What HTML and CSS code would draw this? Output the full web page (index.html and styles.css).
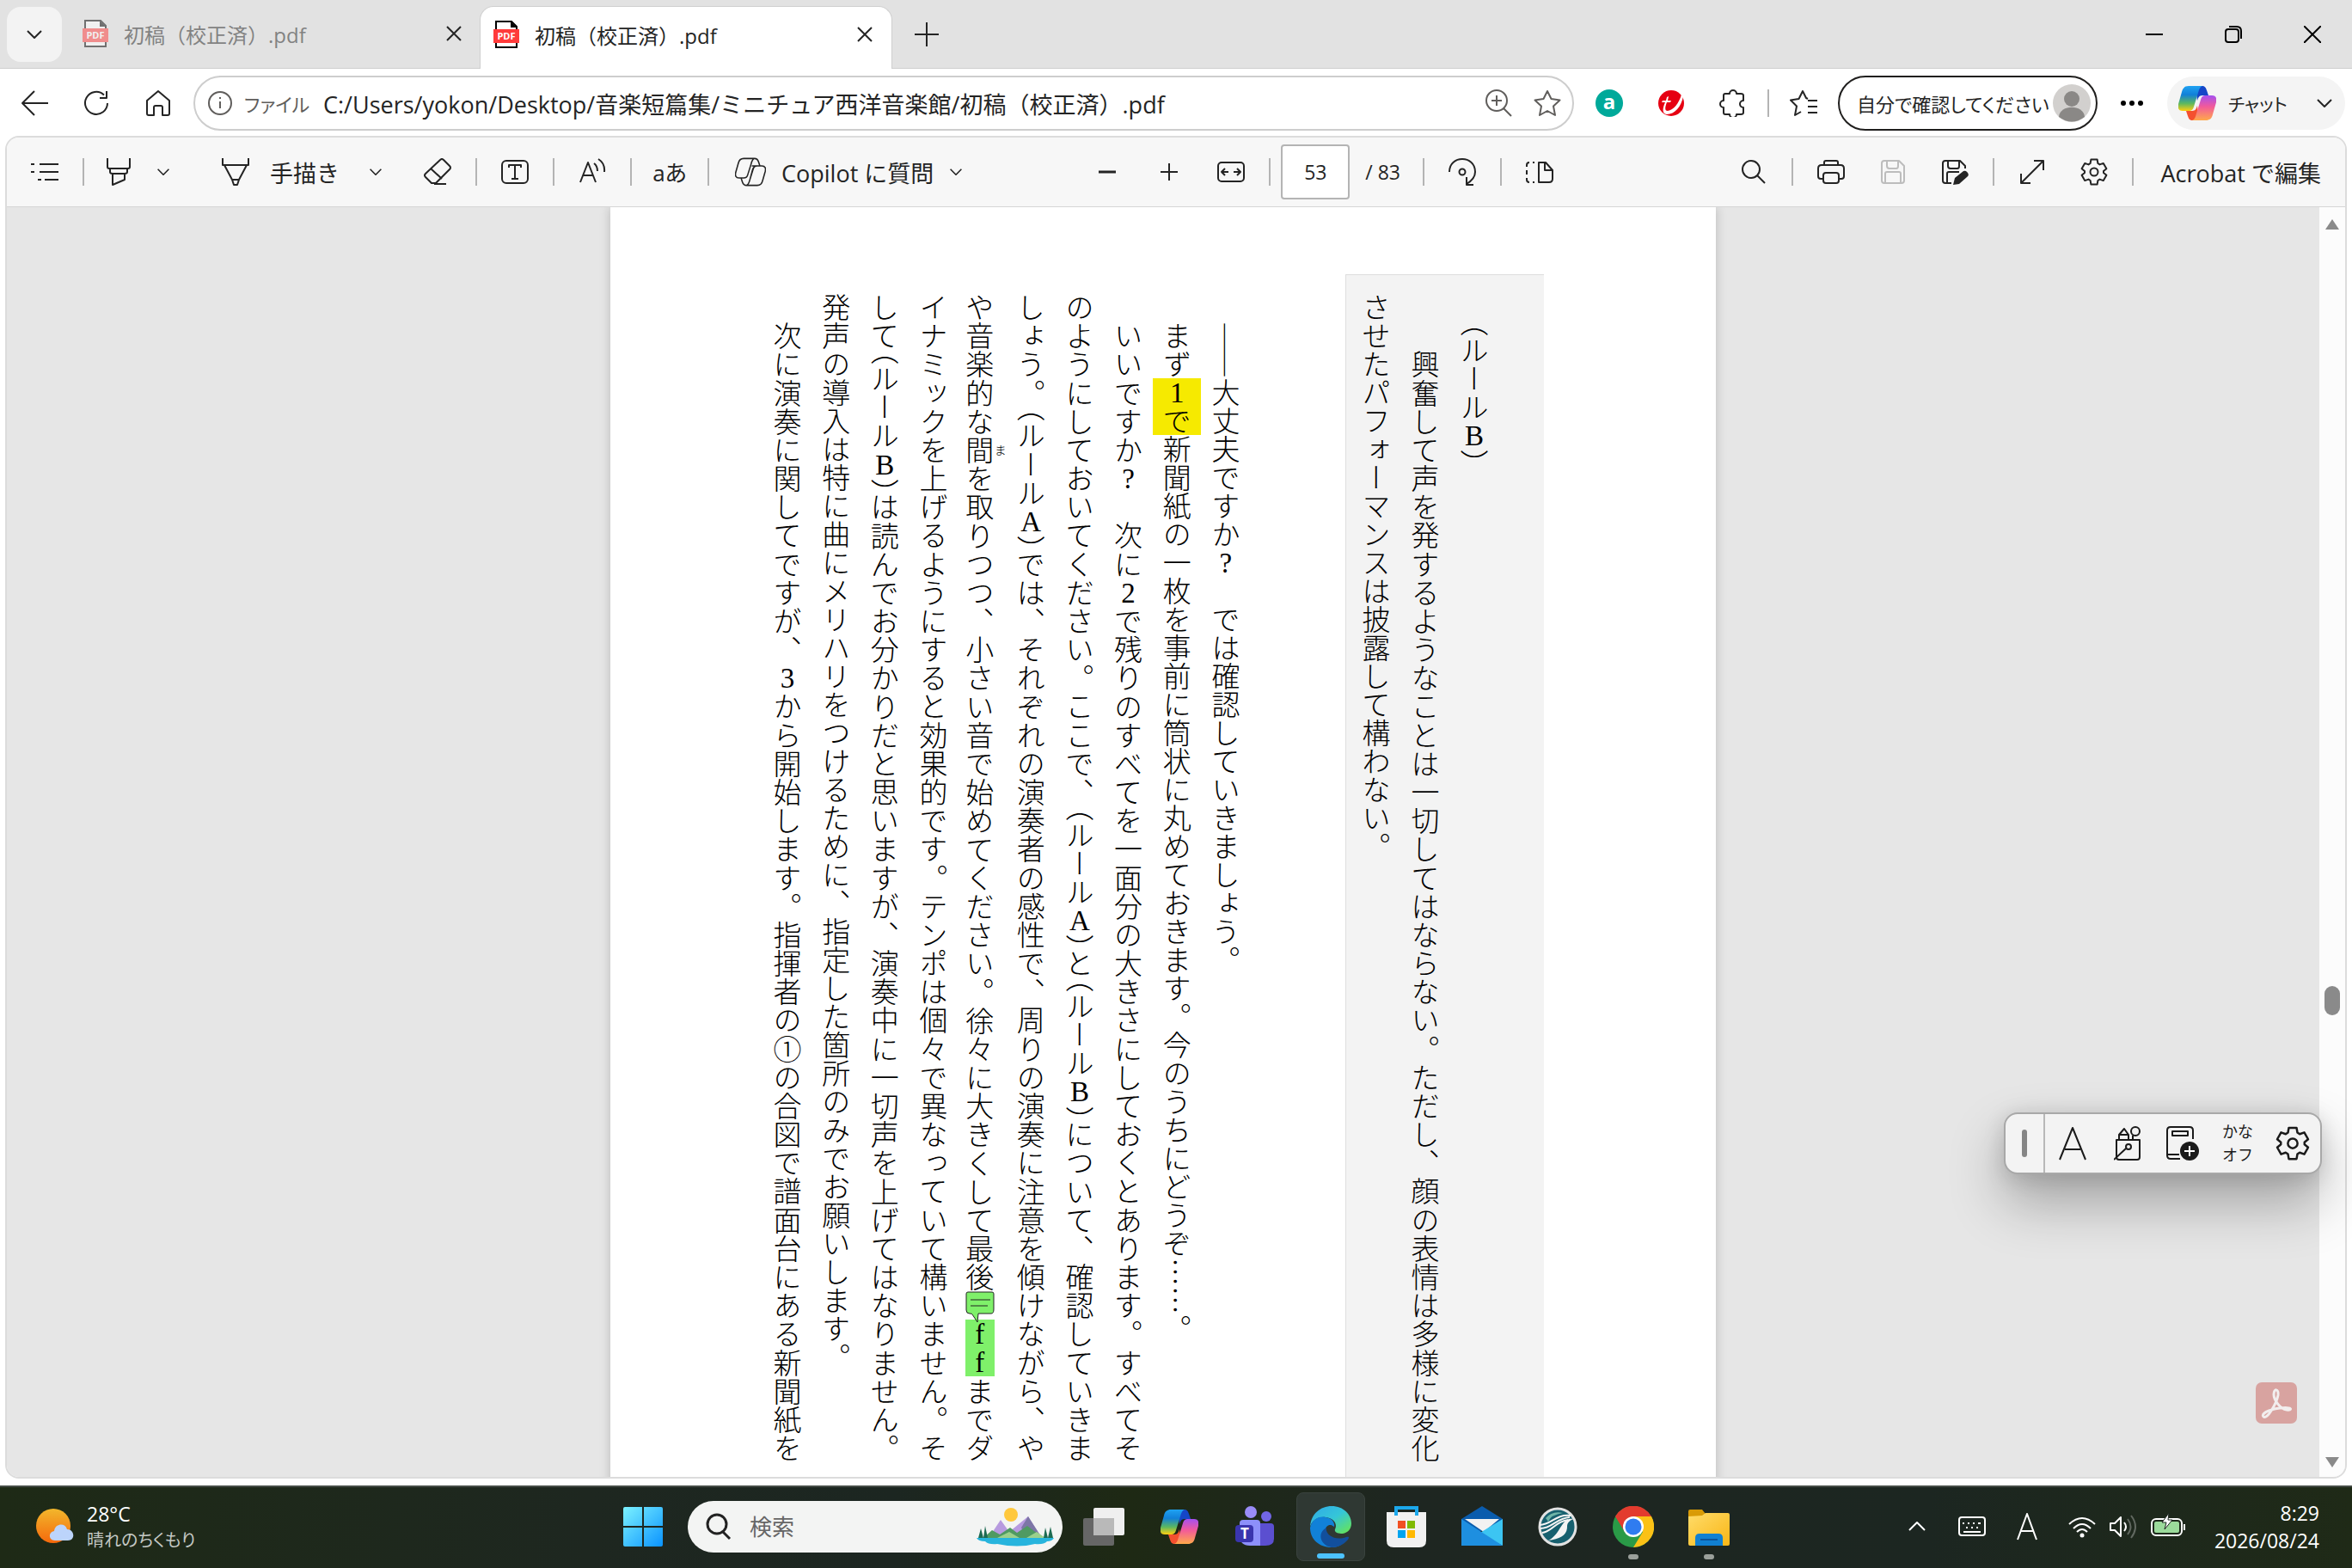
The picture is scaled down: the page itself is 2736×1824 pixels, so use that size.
FILE: index.html
```
<!DOCTYPE html>
<html lang="ja">
<head>
  <meta charset="UTF-8">
  <meta name="viewport" content="width=device-width, initial-scale=1.0">
  <title>初稿（校正済）.pdf</title>
  <link rel="stylesheet" href="styles.css">
</head>
<body>
  <!-- 共通アイコン -->
  <svg class="defs" aria-hidden="true">
    <defs>
      <linearGradient id="cpA" x1="0" y1="0" x2="0" y2="1">
        <stop offset="0" stop-color="#1fa2f2"/><stop offset=".35" stop-color="#1180d8"/>
        <stop offset=".7" stop-color="#5cb860"/><stop offset="1" stop-color="#ffcf10"/>
      </linearGradient>
      <linearGradient id="cpB" x1="0" y1="1" x2="0" y2="0">
        <stop offset="0" stop-color="#a550f0"/><stop offset=".45" stop-color="#f25a9a"/>
        <stop offset="1" stop-color="#ffa94a"/>
      </linearGradient>
      <linearGradient id="edA" x1="0" y1="0" x2="1" y2="1">
        <stop offset="0" stop-color="#2fa8e8"/><stop offset=".5" stop-color="#35c6d8"/><stop offset="1" stop-color="#6be84a"/>
      </linearGradient>
      <linearGradient id="win" x1="0" y1="0" x2="1" y2="1">
        <stop offset="0" stop-color="#7cf2ff"/><stop offset="1" stop-color="#0a93ff"/>
      </linearGradient>
      <linearGradient id="sun" x1="0" y1="0" x2="0" y2="1">
        <stop offset="0" stop-color="#f2b72c"/><stop offset="1" stop-color="#f5690c"/>
      </linearGradient>
      <linearGradient id="fold" x1="0" y1="0" x2="1" y2="1">
        <stop offset="0" stop-color="#ffdc6a"/><stop offset="1" stop-color="#f9b616"/>
      </linearGradient>
    </defs>
    <symbol id="i-x" viewBox="0 0 20 20"><path d="M2 2l16 16M18 2L2 18"/></symbol>
    <symbol id="i-down" viewBox="0 0 20 20"><path d="M2 6l8 8 8-8"/></symbol>
    <symbol id="i-plus" viewBox="0 0 32 32"><path d="M16 2v28M2 16h28"/></symbol>
    <symbol id="i-gear" viewBox="0 0 32 32">
      <path d="M12.4 1.5H19.6L20.4 6L22.5 7.4L26.8 5.9L30.4 12.2L27 15V17L30.4 19.8L26.8 26.1L22.5 24.6L20.4 26L19.6 30.5H12.4L11.6 26L9.5 24.6L5.2 26.1L1.6 19.8L5 17V15L1.6 12.2L5.2 5.9L9.5 7.4L11.6 6Z"/>
      <circle cx="16" cy="16" r="4.5"/>
    </symbol>
    <symbol id="i-copilot" viewBox="0 0 44 40">
      <path d="M20 0h7c4 0 5 2 6 5l2 6h-7c-4 0-5 3-6 6z" fill="#1546c8"/>
      <path d="M20 0h7c4 0 5 2 6 5l2 6h-7c-4 0-5 3-6 6z" transform="rotate(180 22 20)" fill="#f4502f"/>
      <path d="M12 0h16c-3 1-4 4-5 8l-5 16c-1 4-3 5-6 5H5c-5 0-6-4-5-8L4 7c1-5 4-7 8-7z" fill="url(#cpA)"/>
      <path d="M12 0h16c-3 1-4 4-5 8l-5 16c-1 4-3 5-6 5H5c-5 0-6-4-5-8L4 7c1-5 4-7 8-7z" transform="rotate(180 22 20)" fill="url(#cpB)"/>
    </symbol>
  </svg>

  <header class="tabbar">
    <button class="tab-menu" aria-label="タブ操作"><svg class="ico s20"><use href="#i-down"/></svg></button>
    <div class="tab">
      <svg class="pdf-ico" viewBox="0 0 30 32"><path d="M3 1h18l6 6v24H3z" fill="#fff" stroke="#000" stroke-width="2"/><path d="M20 1v7h7z"/><rect y="10" width="30" height="16" fill="#ff3b3b"/><text x="15" y="22" text-anchor="middle" class="pdf-label">PDF</text></svg>
      <span class="tab-title">初稿（校正済）.pdf</span>
      <button class="tab-close" aria-label="閉じる"><svg class="ico s20"><use href="#i-x"/></svg></button>
    </div>
    <div class="tab active">
      <svg class="pdf-ico" viewBox="0 0 30 32"><path d="M3 1h18l6 6v24H3z" fill="#fff" stroke="#000" stroke-width="2"/><path d="M20 1v7h7z"/><rect y="10" width="30" height="16" fill="#ff3b3b"/><text x="15" y="22" text-anchor="middle" class="pdf-label">PDF</text></svg>
      <span class="tab-title">初稿（校正済）.pdf</span>
      <button class="tab-close" aria-label="閉じる"><svg class="ico s20"><use href="#i-x"/></svg></button>
    </div>
    <button class="btn newtab" aria-label="新しいタブ"><svg class="ico s32"><use href="#i-plus"/></svg></button>
    <div class="win-controls">
      <button aria-label="最小化"><svg class="ico s20" viewBox="0 0 20 20"><path d="M0 10h20"/></svg></button>
      <button aria-label="元に戻す"><svg class="ico s20" viewBox="0 0 20 20"><rect x="1" y="4" width="15" height="15" rx="3"/><path d="M5 1h9q5 0 5 5v9"/></svg></button>
      <button aria-label="閉じる"><svg class="ico s20" viewBox="0 0 20 20"><path d="M0 0l20 20M20 0L0 20"/></svg></button>
    </div>
  </header>

  <nav class="navbar">
    <button class="btn" aria-label="戻る"><svg class="ico s32" viewBox="0 0 32 32"><path d="M32 16H2M16 2L2 16l14 14"/></svg></button>
    <button class="btn" aria-label="更新"><svg class="ico s32" viewBox="0 0 32 32"><path d="M29 16a13 13 0 1 1-4-9.500M28 2v8h-8"/></svg></button>
    <button class="btn" aria-label="ホーム"><svg class="ico s32" viewBox="0 0 32 32"><path d="M3 13L16 2l13 11v15q0 2-2 2h-6v-9q0-2-2-2h-6q-2 0-2 2v9H5q-2 0-2-2z"/></svg></button>
    <div class="address">
      <svg class="ico s28 brown" viewBox="0 0 28 28"><circle cx="14" cy="14" r="13"/><path d="M14 12v8M14 7v2"/></svg>
      <label class="scheme kana" for="url">ファイル</label>
      <input id="url" type="text" value="C:/Users/yokon/Desktop/音楽短篇集/ミニチュア西洋音楽館/初稿（校正済）.pdf">
      <button class="btn small" aria-label="ズーム"><svg class="ico s32 brown" viewBox="0 0 32 32"><circle cx="14" cy="13" r="12"/><path d="M22 22l9 9M14 7v12M8 13h12"/></svg></button>
      <button class="btn small" aria-label="お気に入り"><svg class="ico s32 brown" viewBox="0 0 32 32"><path d="M16 2l4.500 9 10 1.500-7.500 7 2 10.500-9-5-9 5 2-10.500-7.500-7 10-1.500z"/></svg></button>
    </div>
    <button class="btn ext" aria-label="拡張機能 a"><span class="ext-a">a</span></button>
    <button class="btn" aria-label="Trend Micro"><svg class="s32" viewBox="0 0 32 32"><circle cx="16" cy="16" r="15" fill="#e60012"/><path d="M13 8l-1 5h4l-1 2h-4c-2 5-3 10 1 10 7-1 13-9 16-19l2 2C28 20 20 29 11 29c-6-1-5-7-2-14H5l1-2h4l1-4z" fill="#fff"/></svg></button>
    <button class="btn" aria-label="拡張機能"><svg class="ico s32" viewBox="0 0 32 32"><path d="M5 7q0-2 2-2h5a4 4 0 0 1 8 0h5q3 0 3 2v6a4 4 0 0 0 0 8v6q0 2-3 2h-5a4 4 0 0 1-8 0H7q-2 0-2-2v-6a4 4 0 0 1 0-8z"/></svg></button>
    <span class="sep nav-sep"></span>
    <button class="btn" aria-label="コレクション"><svg class="ico s32" viewBox="0 0 32 32"><path d="M21 11l-2-1-4-8-4.500 9-9.500 1.500 7 7-2 10.500 7-4M21 13h11M21 20h11M21 27h11"/></svg></button>
    <button class="profile"><span class="kana">自分で確認してください</span>
      <svg class="avatar" viewBox="0 0 44 44"><circle cx="22" cy="22" r="22" fill="#d2d0ce"/><circle cx="22" cy="17" r="9" fill="#8a8886"/><path d="M7 38c1-15 29-15 30 0q-15 11-30 0z" fill="#8a8886"/></svg>
    </button>
    <button class="btn more" aria-label="設定など"><svg class="s32" viewBox="0 0 32 32"><circle cx="6" cy="16" r="3"/><circle cx="16" cy="16" r="3"/><circle cx="26" cy="16" r="3"/></svg></button>
    <button class="chat"><svg class="s44"><use href="#i-copilot"/></svg><span class="kana">チャット</span><svg class="ico s20"><use href="#i-down"/></svg></button>
  </nav>

  <main class="viewer">
    <div class="pdfbar">
      <button class="btn" aria-label="目次"><svg class="ico s32" viewBox="0 0 32 32"><path d="M10 7h22M10 16h22M16 25h16M0 7h4M0 16h4M8 25h4"/></svg></button>
      <span class="sep"></span>
      <button class="btn mid" aria-label="強調表示"><svg class="ico s32" viewBox="0 0 32 32"><path d="M3 0v10q0 2 2 2h22q2 0 2-2V0M6 12v4q0 2 3 2h14q3 0 3-2v-4M9 18v13l14-6v-7"/></svg></button>
      <button class="btn drop" aria-label="強調表示の色"><svg class="ico s16"><use href="#i-down"/></svg></button>
      <button class="btn pen"><svg class="ico s32" viewBox="0 0 32 32"><path d="M1 0v8h30V0M3 8l9 17h8l9-17M12 25l2 6h4l2-6"/></svg><span>手描き</span></button>
      <button class="btn drop" aria-label="ペンの設定"><svg class="ico s16"><use href="#i-down"/></svg></button>
      <button class="btn eraser" aria-label="消しゴム"><svg class="ico s32" viewBox="0 0 32 32"><path d="M19 2q2-2 4 0l7 7q2 2 0 4L14 29H9l-7-7q-2-2 0-4zM8 12l13 12M12 30h14"/></svg></button>
      <span class="sep"></span>
      <button class="btn" aria-label="テキスト"><svg class="ico s32" viewBox="0 0 32 32"><rect x="1" y="3" width="30" height="26" rx="5"/><path d="M9 11V8h14v3M16 8v16M12 24h8"/></svg></button>
      <span class="sep"></span>
      <button class="btn" aria-label="音声で読み上げる"><svg class="ico s32" viewBox="0 0 32 32"><path d="M2 28L11 5l9 23M5 20h12M18 6q4 3 4 9M23 1q8 5 7 15"/></svg></button>
      <span class="sep"></span>
      <button class="btn translate kana" aria-label="翻訳">aあ</button>
      <span class="sep"></span>
      <button class="btn copilot"><svg class="ico s36" viewBox="-1 -1 46 42"><path d="M12 0h16c4 0 5 2 6 5l2 6h-4c-4 0-6 2-7 6l-4 15M28 0c-3 1-4 4-5 8l-5 16c-1 4-3 5-6 5H5c-5 0-6-4-5-8L4 7c1-5 4-7 8-7zM24 11h11M32 40H16c-4 0-5-2-6-5l-2-6M16 40c3-1 4-4 5-8l5-16c1-4 3-5 6-5h7c5 0 6 4 5 8l-4 14c-1 5-4 7-8 7z"/></svg><span>Copilot に質問</span><svg class="ico s16"><use href="#i-down"/></svg></button>

      <div class="pager">
        <button class="btn" aria-label="縮小"><svg class="ico s20 bold" viewBox="0 0 20 20"><path d="M0 10h20"/></svg></button>
        <button class="btn" aria-label="拡大"><svg class="ico s20" viewBox="0 0 20 20"><path d="M0 10h20M10 0v20"/></svg></button>
        <button class="btn" aria-label="幅に合わせる"><svg class="ico s32" viewBox="0 0 32 32"><rect x="1" y="5" width="30" height="22" rx="4"/><path d="M13 16H5l4-4M5 16l4 4M19 16h8l-4-4M27 16l-4 4"/></svg></button>
        <span class="sep"></span>
        <input class="page-no" type="text" value="53" aria-label="ページ番号">
        <span class="page-total">/ 83</span>
        <span class="sep"></span>
        <button class="btn" aria-label="回転"><svg class="ico s32" viewBox="0 0 32 32"><path d="M1 16C1-4 31-4 31 16q0 8-10 14M21 22v9h8"/><circle cx="16" cy="16" r="3.500"/></svg></button>
        <span class="sep"></span>
        <button class="btn" aria-label="ページ表示"><svg class="ico s32" viewBox="0 0 32 32"><path d="M15 5h8l8 9v10q0 4-4 4H15zM22 5v9h9M10 5H8M1 10V8q0-3 3-3M1 14v5M1 23v2q0 3 3 3M8 28h2"/></svg></button>
      </div>

      <div class="tools">
        <button class="btn" aria-label="検索"><svg class="ico s28" viewBox="0 0 28 28"><circle cx="11" cy="11" r="10"/><path d="M18 18l9 9"/></svg></button>
        <span class="sep"></span>
        <button class="btn" aria-label="印刷"><svg class="ico s32" viewBox="0 0 32 32"><path d="M8 8V5q0-2 2-2h12q2 0 2 2v3M7 24H4q-3 0-3-3v-9q0-4 4-4h22q4 0 4 4v9q0 3-3 3h-3"/><rect x="7" y="17" width="18" height="12" rx="3"/></svg></button>
        <button class="btn off" aria-label="上書き保存" disabled><svg class="ico s32" viewBox="0 0 32 32"><path d="M3 6q0-3 3-3h17l6 6v17q0 3-3 3H6q-3 0-3-3zM9 3v6q0 3 3 3h8q2 0 2-3V3M7 29V18q0-2 2-2h14q2 0 2 2v11"/></svg></button>
        <button class="btn" aria-label="名前を付けて保存"><svg class="ico s32" viewBox="0 0 32 32"><path d="M12 29H5q-3 0-3-3V6q0-3 3-3h17l6 6v3M8 3v6q0 3 3 3h8q2 0 2-3V3M7 29V18q0-2 2-2h12"/><path d="M14 31l2-8 10-8q3-1 5 2t-1 5l-9 8z" fill="currentColor" stroke="none"/></svg></button>
        <span class="sep"></span>
        <button class="btn" aria-label="全画面表示"><svg class="ico s28" viewBox="0 0 28 28"><path d="M16 1h11v11M27 1L1 27M1 16v11h11"/></svg></button>
        <button class="btn" aria-label="設定"><svg class="ico s32"><use href="#i-gear"/></svg></button>
        <span class="sep"></span>
        <button class="acro-edit">Acrobat で編集</button>
      </div>
    </div>

    <div class="canvas">
      <div class="scroll">
        <article class="page">
          <section class="rule-box">
            <p>　<span class="hp">（</span>ルール<span class="tcy">B</span><span class="hp">）</span></p>
            <p class="full">　　興奮して声を発するようなことは一切してはならない。ただし、顔の表情は多様に変化</p>
            <p>させたパフォーマンスは披露して構わない。</p>
          </section>
          <section class="body-text">
            <p>　――大丈夫ですか<span class="tcy">?</span>　では確認していきましょう。</p>
            <p>　まず<mark class="yellow"><span class="tcy">1</span>で</mark>新聞紙の一枚を事前に筒状に丸めておきます。今のうちにどうぞ……。</p>
            <p class="full">　いいですか<span class="tcy">?</span>　次に<span class="tcy">2</span>で残りのすべてを一面分の大きさにしておくとあります。すべてそ</p>
            <p class="full">のようにしておいてください。ここで、<span class="hp">（</span>ルール<span class="tcy">A</span><span class="hp">）</span>と<span class="hp">（</span>ルール<span class="tcy">B</span><span class="hp">）</span>について、確認していきま</p>
            <p class="full">しょう。<span class="hp">（</span>ルール<span class="tcy">A</span><span class="hp">）</span>では、それぞれの演奏者の感性で、周りの演奏に注意を傾けながら、や</p>
            <p class="full">や音楽的な<ruby>間<rt>ま</rt></ruby>を取りつつ、小さい音で始めてください。徐々に大きくして最後<span class="note"><svg viewBox="0 0 34 38"><path d="M3 1h28q2 0 2 2v18q0 5-3 5H15l-1 10-6-9q0-1-3-1-4 0-4-4V3q0-2 2-2z" fill="#7ff06a" stroke="#222"/><path d="M6 10h23M6 17h20" stroke="#222"/></svg></span><mark class="green"><span class="tcy">f</span><span class="tcy">f</span></mark>までダ</p>
            <p class="full">イナミックを上げるようにすると効果的です。テンポは個々で異なっていて構いません。そ</p>
            <p class="full">して<span class="hp">（</span>ルール<span class="tcy">B</span><span class="hp">）</span>は読んでお分かりだと思いますが、演奏中に一切声を上げてはなりません。</p>
            <p>発声の導入は特に曲にメリハリをつけるために、指定した箇所のみでお願いします。</p>
            <p class="full">　次に演奏に関してですが、<span class="tcy">3</span>から開始します。指揮者の①の合図で譜面台にある新聞紙を</p>
          </section>
        </article>
      </div>
      <div class="scrollbar">
        <span class="arrow up"></span>
        <span class="thumb"></span>
        <span class="arrow down"></span>
      </div>
    </div>
  </main>

  <button class="acrobat" aria-label="Acrobat"><svg viewBox="0 0 48 48"><path d="M9 40c-3-3 4-8 19-10 15-2 15 3 8 2-8-1-15-12-15-18 0-7 6-7 5 1-2 10-13 29-17 25z" fill="none" stroke="#f2eeee" stroke-width="3"/></svg></button>

  <!-- IME ツールバー -->
  <div class="ime">
    <span class="grip"></span>
    <button aria-label="半角英数"><svg class="ico" viewBox="0 0 32 40"><path d="M1 39L16 2l15 37M7 27h18"/></svg></button>
    <button aria-label="IME パッド"><svg class="ico" viewBox="0 0 32 40"><path d="M3 16h27v20q0 3-3 3H6q-3 0-3-3zM6 15v-5l6-7 5 7v5M7 10h10M22 15v-4"/><circle cx="25" cy="6" r="5"/><circle cx="17" cy="24" r="3"/><path d="M0 39l14-13"/></svg></button>
    <button aria-label="辞書"><svg class="ico wide" viewBox="0 0 40 40"><path d="M17 38H6q-4 0-4-4V5q0-4 4-4h22q4 0 4 4v10M2 33h14M8 6h18v5H8z"/><circle cx="28" cy="29" r="11" fill="#1a1a1a" stroke="none"/><path d="M28 23v12M22 29h12" stroke="#fff"/></svg></button>
    <button class="ime-kana">かな<br>オフ</button>
    <button aria-label="設定"><svg class="ico wide"><use href="#i-gear"/></svg></button>
  </div>

  <footer class="taskbar">
    <div class="weather">
      <svg viewBox="0 0 44 44"><circle cx="20" cy="21" r="20" fill="url(#sun)"/><path d="M22 38c-8 0-8-10-1-11 1-9 13-10 15-2 9 0 10 13 1 13z" fill="#bcd4fb"/></svg>
      <div><div class="temp">28°C</div><div class="cond kana">晴れのちくもり</div></div>
    </div>
    <div class="apps">
      <button class="app start" aria-label="スタート"><svg class="s46" viewBox="0 0 46 46"><path d="M2 0h20v22H0V2q0-2 2-2zM24 0h20q2 0 2 2v20H24zM0 24h22v22H2q-2 0-2-2zM24 24h22v20q0 2-2 2H24z" fill="url(#win)"/></svg></button>
      <label class="search">
        <svg class="ico s32" viewBox="0 0 32 32"><circle cx="15" cy="13" r="11"/><path d="M22 22l8 8"/></svg>
        <input type="text" placeholder="検索">
        <svg class="scene" viewBox="0 0 90 46">
          <circle cx="40" cy="9" r="8" fill="#ffc83d"/>
          <path d="M14 36l14-21 10 14 22-18 16 25z" fill="#b79adf"/>
          <path d="M60 11l16 25H58l-6-12z" fill="#7d76a6"/>
          <path d="M8 36l10-9 9 5 12-8 8 6 12-8 8 6 12 8z" fill="#4f9a62"/>
          <path d="M24 36l14-7 12 7zM58 36l12-7 10 7z" fill="#9bd08c"/>
          <path d="M2 36l3-11 3 11zM8 36l2-14 3 14zM78 36l2-12 3 12zM83 36l3-13 3 13z" fill="#1d6b52"/>
          <path d="M0 36h90q-2 4-8 4-4 4-14 3-20 5-44 0-10 1-14-3-8 0-10-4z" fill="#27b4dd"/>
        </svg>
      </label>
      <button class="app" aria-label="タスク ビュー"><svg class="s48" viewBox="0 0 48 48"><rect x="12" y="2" width="36" height="32" rx="2" fill="#efefef"/><rect y="14" width="36" height="32" rx="2" fill="#666"/><path d="M12 14h24v20H12z" fill="#b9b9b9"/></svg></button>
      <button class="app" aria-label="Copilot"><svg class="s44"><use href="#i-copilot"/></svg></button>
      <button class="app" aria-label="Teams"><svg class="s48" viewBox="2 0 48 48"><circle cx="21" cy="7" r="7" fill="#9a8cf8"/><circle cx="39" cy="12" r="6" fill="#7266e6"/><path d="M30 20h14q4 0 4 4v14q0 8-10 8h-8z" fill="#5b4fd0"/><path d="M12 16h16q4 0 4 4v26H20q-12 0-12-12V20q0-4 4-4z" fill="#8d90fa"/><rect x="3" y="22" width="21" height="20" rx="4" fill="#3a35ae"/><text x="14" y="38" text-anchor="middle" class="teams-t">T</text></svg></button>
      <button class="app current" aria-label="Microsoft Edge"><svg class="s48" viewBox="0 0 48 48">
        <path d="M0 24C1 9 12 0 25 0c14 0 23 10 23 20 0 8-6 12-12 12-5 0-8-2-7-5 3-6-1-13-11-14C9 12 2 17 0 24z" fill="url(#edA)"/>
        <path d="M0 25c2-9 10-14 18-12 8 1 11 7 10 11-7-6-13 2-10 11 3 7 10 11 18 10-3 2-7 3-11 3C10 48 0 38 0 25z" fill="#1181d8"/>
        <path d="M19 25c-2 8 10 16 23 11 3-1 4 0 2 3-5 6-12 9-19 9-14-3-17-17-6-23z" fill="#124f9c"/></svg></button>
      <button class="app" aria-label="Microsoft Store"><svg class="s48" viewBox="0 0 48 48"><path d="M1 7h46v33q0 8-8 8H9q-8 0-8-8z" fill="#f1f1f1"/><path d="M12 11V2h24v9" fill="none" stroke="#1ba8ec" stroke-width="4"/><path d="M14 17h9v9h-9z" fill="#f25022"/><path d="M25 17h9v9h-9z" fill="#7fba00"/><path d="M14 28h9v9h-9z" fill="#00a4ef"/><path d="M25 28h9v9h-9z" fill="#ffb900"/></svg></button>
      <button class="app" aria-label="メール"><svg class="s48" viewBox="0 0 48 48"><path d="M0 15L24 0l24 15v14H0z" fill="#0a5cad"/><path d="M4 15h40L26 30z" fill="#f2f2f2"/><path d="M48 15L20 32l28 14z" fill="#3cc5f2"/><path d="M0 15l48 31H0z" fill="#1e8fe0"/></svg></button>
      <button class="app" aria-label="天体"><svg class="s48" viewBox="0 0 48 48"><circle cx="24" cy="24" r="21" fill="#17606f" stroke="#e2e2e2" stroke-width="3"/><path d="M10 14q8-9 20-6-14 2-17 10z" fill="#6fb5a8"/><path d="M3 22c14 0 18-13 36-11M4 26c14 0 18-12 34-13M6 31c11-1 15-13 30-15" fill="none" stroke="#f4f4f4" stroke-width="2"/><path d="M42 15c-14-3-14 18-29 25 14-2 22-6 22-16 0-5 3-7 7-9z" fill="#f4f4f4"/></svg></button>
      <button class="app open" aria-label="Google Chrome"><svg class="s48" viewBox="0 0 48 48"><circle cx="24" cy="24" r="24" fill="#2a9a47"/><path d="M24 12h21A24 24 0 0 1 24 48l11-18z" fill="#fbc116"/><path d="M3 12a24 24 0 0 1 42 0H24L14 30z" fill="#e33b2e"/><circle cx="24" cy="24" r="12" fill="#fff"/><circle cx="24" cy="24" r="9.500" fill="#2f7cf0"/></svg></button>
      <button class="app open" aria-label="エクスプローラー"><svg class="s48" viewBox="0 0 48 48"><path d="M0 6q0-2 2-2h14l4 5h26v6H0z" fill="#d99b06"/><path d="M0 12l16-1 4-3h26q2 0 2 2v34q0 2-2 2H2q-2 0-2-2z" fill="url(#fold)"/><path d="M8 46V37q0-5 5-5h22q5 0 5 5v9z" fill="#1180d2"/><path d="M14 39h20" stroke="#0b559c" stroke-width="2"/></svg></button>
    </div>
    <div class="tray">
      <svg class="ico s20" viewBox="0 0 20 20"><path d="M1 14l9-9 9 9"/></svg>
      <svg class="ico s32" viewBox="0 0 32 32"><rect x="1" y="5" width="30" height="21" rx="3"/><path d="M6 22h20M5 12h2M11 12h2M17 12h2M23 12h3M9 17h2M15 17h2M21 17h2"/></svg>
      <svg class="ico s32" viewBox="0 0 32 32"><path d="M5 31L16 1l11 30M9 21h14"/></svg>
      <button class="status" aria-label="ネットワーク、音量、バッテリー">
        <svg class="ico s32" viewBox="0 0 32 32"><path d="M1 13q15-14 30 0M6 18q10-10 20 0M10 22q6-6 12 0"/><circle cx="16" cy="26" r="2.500" fill="#fff" stroke="none"/></svg>
        <svg class="ico s32" viewBox="0 0 32 32"><path d="M1 12h5l7-7v22l-7-7H1zM17 11q4 5 0 10"/><path d="M21 7q7 9 0 18M25 3q10 13 0 26" opacity=".3"/></svg>
        <svg class="ico bat" viewBox="0 0 42 32"><rect x="1" y="7" width="35" height="19" rx="5"/><rect x="4" y="10" width="29" height="13" rx="2" fill="#9bdb9b" stroke="none"/><path d="M39 13v7"/><path d="M21 0l-8 11h5l-2 8 9-11h-5z" fill="#fff" stroke="#1d2620" stroke-width="1"/></svg>
      </button>
      <div class="clock"><div>8:29</div><div>2026/08/24</div></div>
    </div>
  </footer>
</body>
</html>
```
FILE: styles.css
```
* {
  box-sizing: border-box;
}
body {
  margin: 0;
  height: 100vh;
  display: flex;
  flex-direction: column;
  overflow: hidden;
  background: #fff;
  color: #242424;
  font-family: "Open Sans", "Noto Sans CJK JP", sans-serif;
  font-size: 24px;
}
button, input {
  font: inherit;
  color: inherit;
  background: none;
  border: 0;
  padding: 0;
}
.defs {
  position: absolute;
  width: 0;
  height: 0;
}
svg {
  flex: none;
  display: block;
}
.ico {
  fill: none;
  stroke: currentColor;
  stroke-width: 2;
  stroke-linejoin: round;
}
.bold { stroke-width: 3; }
.brown { color: #605e5c; }
.s16 { width: 16px; height: 16px; }
.s20 { width: 20px; height: 20px; }
.s28 { width: 28px; height: 28px; }
.s32 { width: 32px; height: 32px; }
.s36 { width: 36px; height: 36px; }
.s44 { width: 44px; height: 44px; }
.s46 { width: 46px; height: 46px; }
.s48 { width: 48px; height: 48px; }
.kana {
  font-feature-settings: "palt";
}
.btn {
  width: 72px;
  height: 64px;
  flex: none;
  display: flex;
  align-items: center;
  justify-content: center;
}
.sep {
  flex: none;
  width: 2px;
  height: 32px;
  margin: 0 8px;
  background: #b4b4b4;
}

/* tabs */
.tabbar {
  height: 80px;
  flex: none;
  display: flex;
  align-items: center;
  background: #e2e2e2;
  border-bottom: 1px solid #cfcfcf;
}
.tab-menu {
  width: 64px;
  height: 64px;
  margin: 0 8px;
  border-radius: 16px;
  background: #f3f3f3;
  display: flex;
  align-items: center;
  justify-content: center;
}
.tab {
  width: 478px;
  height: 72px;
  align-self: flex-end;
  display: flex;
  align-items: center;
  padding: 0 14px 8px 16px;
}
.tab.active {
  width: 480px;
  margin-bottom: -1px;
  height: 73px;
  background: #fff;
  border: 1px solid #cfcfcf;
  border-bottom: 0;
  border-radius: 16px 16px 0 0;
  padding: 0 15px 8px;
}
.tab:not(.active) .pdf-ico,
.tab:not(.active) .tab-title {
  opacity: .5;
}
.pdf-ico {
  width: 30px;
  height: 32px;
}
.pdf-label {
  font: bold 11px "Open Sans", sans-serif;
  fill: #fff;
}
.tab-title {
  flex: 1;
  margin-left: 18px;
}
.tab-close {
  width: 32px;
  height: 32px;
  display: flex;
  align-items: center;
  justify-content: center;
}
.newtab { margin-left: 4px; }
.win-controls {
  margin-left: auto;
  display: flex;
}
.win-controls button {
  width: 92px;
  height: 64px;
  display: flex;
  align-items: center;
  justify-content: center;
  color: #000;
}

/* address row */
.navbar {
  height: 78px;
  flex: none;
  display: flex;
  align-items: center;
  padding: 2px 8px 0 4px;
}
.address {
  flex: 1;
  height: 64px;
  margin: 0 5px;
  border: 2px solid #cdcdcd;
  border-radius: 32px;
  display: flex;
  align-items: center;
  padding: 0 1px 0 15px;
}
.scheme {
  margin-left: 14px;
  width: 92px;
  font-size: 22px;
  color: #605e5c;
}
.address input {
  flex: 1;
  min-width: 0;
  font-size: 27px;
}
.btn.small { width: 57px; }
.ext-a {
  width: 32px;
  height: 32px;
  border-radius: 50%;
  background: #00a99a;
  color: #fff;
  font-weight: bold;
  line-height: 28px;
  text-align: center;
}
.nav-sep { margin: 0 4px; }
.profile {
  width: 302px;
  height: 64px;
  margin: 0 4px;
  border: 2px solid #201f1e;
  border-radius: 32px;
  padding: 0 6px 0 20px;
  display: flex;
  align-items: center;
  justify-content: space-between;
  font-size: 22px;
  white-space: nowrap;
}
.avatar {
  width: 44px;
  height: 44px;
}
.chat {
  width: 207px;
  height: 62px;
  margin-left: 5px;
  border-radius: 31px;
  background: #f4f4f4;
  display: flex;
  align-items: center;
  padding: 0 14px 0 13px;
  font-size: 21px;
}
.chat .kana {
  flex: 1;
  text-align: left;
  margin-left: 14px;
}

/* viewer */
.viewer {
  flex: 1;
  min-height: 0;
  margin: 0 6px 8px;
  border: 2px solid #dcdcdc;
  border-radius: 16px;
  overflow: hidden;
  display: flex;
  flex-direction: column;
}
.pdfbar {
  height: 81px;
  flex: none;
  display: flex;
  align-items: center;
  padding-left: 8px;
  background: #f7f7f7;
  border-bottom: 1px solid #d6d6d6;
  font-size: 27px;
}
.mid { width: 64px; }
.drop { width: 40px; }
.pen {
  width: auto;
  margin: 0 22px 0 48px;
  gap: 24px;
}
.eraser { margin-left: 16px; }
.translate { font-size: 26px; }
.copilot {
  width: auto;
  padding: 0 24px 0 22px;
  gap: 18px;
}
.pager {
  display: flex;
  align-items: center;
  margin-left: 108px;
}
.page-no {
  width: 80px;
  height: 64px;
  margin-left: 4px;
  border: 2px solid #b4b4b4;
  border-radius: 4px;
  background: #fff;
  text-align: center;
  font-size: 23px;
}
.page-total {
  width: 77px;
  padding-left: 18px;
  font-size: 23px;
}
.tools {
  display: flex;
  align-items: center;
  margin-left: auto;
}
.off { color: #bdbdbd; }
.acro-edit {
  padding: 0 28px 0 24px;
  white-space: nowrap;
}
.canvas {
  flex: 1;
  min-height: 0;
  display: flex;
  background: #e6e6e6;
}
.scroll {
  flex: 1;
  overflow: hidden;
}
.page {
  width: 1286px;
  min-height: 100%;
  margin: 0 auto;
  padding: 78px 200px 0 178px;
  background: #fff;
  box-shadow: 0 0 12px rgba(0, 0, 0, .2);
  display: flex;
  flex-direction: row-reverse;
  justify-content: space-between;
  color: #000;
  font-family: "Noto Sans CJK JP", sans-serif;
  font-size: 33px;
  font-weight: 300;
}
.page p {
  writing-mode: vertical-rl;
  text-spacing-trim: space-all;
  white-space: nowrap;
  line-height: 56px;
  width: 56px;
  height: 1360px;
  margin: 0;
}
.page .full {
  text-align: justify;
  text-align-last: justify;
  white-space: normal;
  line-break: anywhere;
}
.rule-box {
  width: 231px;
  display: flex;
  flex-direction: row-reverse;
  gap: 1px;
  padding: 21px 53px 100px 0;
  background: #f3f3f3;
  border-top: 1px solid #dedede;
  border-left: 1px solid #dedede;
}
.body-text {
  width: 566px;
  padding-top: 22px;
  display: flex;
  flex-direction: row-reverse;
  justify-content: space-between;
}
/* half-width brackets */
.hp {
  font-feature-settings: "vhal";
}
.tcy {
  display: inline-block;
  text-align-last: auto;
  font-family: "Liberation Serif", serif;
  text-combine-upright: all;
}
mark {
  display: inline-block;
  color: inherit;
  text-align-last: auto;
}
.yellow { background: #f6ea00; }
.green {
  background: #7ff06a;
  line-height: 34px;
}
ruby rt {
  font-size: 14px;
  line-height: 14px;
}
.note {
  display: inline-block;
  position: relative;
  width: 34px;
  height: 33px;
  line-height: 34px;
}
.note svg {
  position: absolute;
  top: 0;
  left: 0;
  width: 34px;
  height: 38px;
  fill: none;
  z-index: 1;
}
.scrollbar {
  width: 30px;
  background: #fcfcfc;
  display: flex;
  flex-direction: column;
  align-items: center;
  padding: 14px 0 11px;
}
.arrow {
  border: 8px solid transparent;
  border-top: 0;
  border-bottom: 12px solid #8a8a8a;
}
.arrow.down {
  border-top: 12px solid #8a8a8a;
  border-bottom: 0;
  margin-top: auto;
}
.thumb {
  width: 18px;
  height: 34px;
  margin-top: 880px;
  border-radius: 9px;
  background: #8a8a8a;
}

/* floating over the page */
.acrobat {
  position: absolute;
  right: 64px;
  bottom: 168px;
  width: 48px;
  height: 48px;
  border-radius: 7px;
  background: #d8a3a0;
}
.ime {
  position: absolute;
  right: 35px;
  bottom: 458px;
  height: 72px;
  border: 2px solid #a8a8a8;
  border-radius: 16px;
  background: #f3f3f3;
  box-shadow: 0 32px 64px rgba(0, 0, 0, .3), 0 4px 24px rgba(0, 0, 0, .15);
  display: flex;
  align-items: stretch;
  color: #1a1a1a;
}
.ime .grip {
  width: 46px;
  border-right: 2px solid #b8b8b8;
  display: flex;
  align-items: center;
  justify-content: center;
}
.grip::before {
  content: "";
  width: 6px;
  height: 32px;
  border-radius: 3px;
  background: #858585;
}
.ime button {
  width: 64px;
  display: flex;
  align-items: center;
  justify-content: center;
}
.ime svg {
  width: 32px;
  height: 40px;
}
.ime .wide {
  width: 40px;
}
.ime .ime-kana {
  font-size: 18px;
  line-height: 27px;
}

/* taskbar */
.taskbar {
  height: 96px;
  flex: none;
  display: grid;
  grid-template-columns: 1fr auto 1fr;
  align-items: center;
  padding-bottom: 3px;
  background: linear-gradient(90deg, #1e2a16, #1e2720 25%, #1c2621 38%, #1e2914 48%, #1e2621 60%, #1c2621 82%, #1f2a17);
  border-top: 2px solid #454c46;
  color: #fff;
}
.weather {
  display: flex;
  align-items: center;
  gap: 15px;
  padding-left: 42px;
}
.weather svg {
  width: 44px;
  height: 44px;
}
.weather .temp, .clock {
  font-size: 23px;
  line-height: 32px;
}
.cond {
  font-size: 20px;
  line-height: 30px;
  color: #c4c8c4;
}
.apps {
  display: flex;
  align-items: center;
  gap: 8px;
}
.app {
  position: relative;
  width: 80px;
  height: 80px;
  display: flex;
  align-items: center;
  justify-content: center;
  border-radius: 8px;
}
.current {
  background: #2f3833;
  border: 1px solid #3a433e;
}
.current::after, .open::after {
  content: "";
  position: absolute;
  bottom: 2px;
  left: 50%;
  margin-left: -6px;
  width: 12px;
  height: 6px;
  border-radius: 3px;
  background: #9a9f9a;
}
.current::after {
  width: 32px;
  margin-left: -16px;
  background: #4cc2ff;
}
.teams-t {
  font: bold 17px "Open Sans", sans-serif;
  fill: #fff;
}
.search {
  width: 436px;
  height: 60px;
  margin-left: 4px;
  border-radius: 30px;
  background: #f3f4f3;
  display: flex;
  align-items: center;
  padding: 0 10px 0 19px;
  color: #222;
}
.search .ico { stroke-width: 3; }
.search input {
  flex: 1;
  min-width: 0;
  margin-left: 21px;
  font-size: 26px;
}
.search input::placeholder { color: #666; }
.scene {
  width: 90px;
  height: 46px;
}
.tray {
  display: flex;
  align-items: center;
  justify-content: flex-end;
  padding-right: 38px;
}
.tray > .s20 { margin-right: 38px; }
.tray > .s32 { margin-right: 32px; }
.status {
  display: flex;
  align-items: center;
  gap: 16px;
}
.bat {
  width: 42px;
  height: 32px;
}
.clock {
  margin-left: 32px;
  text-align: right;
}
```
